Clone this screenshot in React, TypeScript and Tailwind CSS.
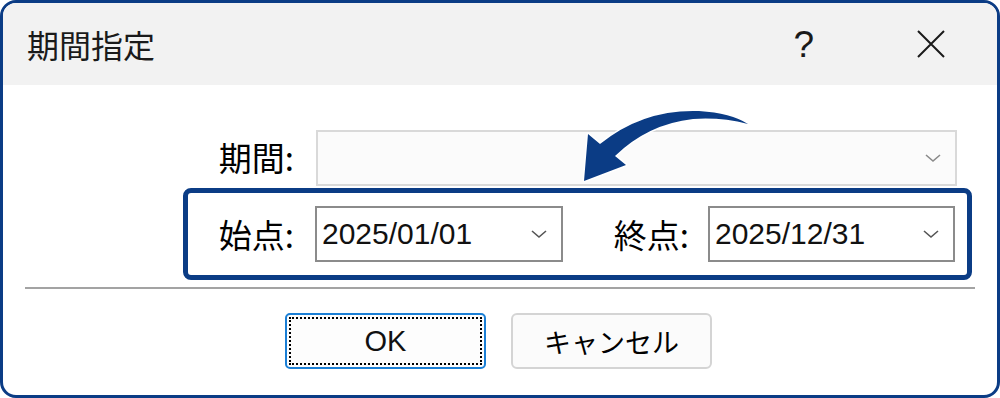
import { ReactNode } from "react";

const JP = "font-['Noto_Sans_CJK_JP','Noto_Sans',sans-serif]";
const LATIN = "font-['Liberation_Sans','Noto_Sans_CJK_JP',sans-serif]";

function Chevron({ light }: { light?: boolean }) {
  return (
    <svg width="18" height="12" viewBox="0 0 18 12" aria-hidden="true">
      <polyline
        points="2,3 9,9 16,3"
        fill="none"
        stroke={light ? "#8a8a8a" : "#555"}
        strokeWidth="1.6"
      />
    </svg>
  );
}

function Combo({ value, width, disabled }: { value?: string; width: string; disabled?: boolean }) {
  return (
    <div
      className={`flex h-[56px] items-center justify-between border-2 pl-[5px] pr-[13px] ${width} ${
        disabled ? "border-[#d9d9d9] bg-[#fbfbfb]" : "border-[#8b8b8b] bg-white"
      }`}
    >
      <span className={`${LATIN} text-[30px] leading-none text-[#111]`}>{value}</span>
      <Chevron light={disabled} />
    </div>
  );
}

function Label({ children, width, pr }: { children: ReactNode; width: string; pr: string }) {
  return (
    <div className={`${JP} ${width} ${pr} shrink-0 text-right text-[33px] leading-none text-black`}>
      {children}
    </div>
  );
}

function CurvedArrow() {
  return (
    <svg
      className="pointer-events-none absolute left-0 top-0"
      width="1000"
      height="398"
      viewBox="0 0 1000 398"
      aria-hidden="true"
    >
      <path
        d="M 597 141 Q 640 106 696 108 Q 728 110 745 121 Q 718 114 690 116 Q 645 121 612 153 L 623 162 L 581 178 L 585 131 Z"
        fill="#0b3c85"
        stroke="#ffffff"
        strokeWidth="3"
        strokeLinejoin="round"
        paintOrder="stroke"
      />
    </svg>
  );
}

export default function App() {
  return (
    <div className="relative h-[398px] w-[1000px] overflow-hidden rounded-[16px] border-[3px] border-[#0b3c85] bg-white">
      {/* title bar */}
      <div className="flex h-[82px] items-center bg-[#f2f2f2] pl-[24px]">
        <span className={`${JP} text-[32px] leading-none text-[#1a1a1a]`}>期間指定</span>
        <span className={`${LATIN} ml-auto text-[37px] leading-none text-[#1a1a1a]`}>?</span>
        <svg className="ml-[103px] mr-[52px]" width="28" height="28" viewBox="0 0 28 28" aria-hidden="true">
          <path d="M1 1 L27 27 M27 1 L1 27" stroke="#1a1a1a" strokeWidth="2" />
        </svg>
      </div>

      {/* body */}
      <div className="flex flex-col">
        <div className="mt-[45px] flex h-[55px] items-center">
          <Label width="w-[313px]" pr="pr-[22px]">期間:</Label>
          <Combo width="w-[641px]" disabled />
        </div>

        <div className="ml-[180px] mt-[3px] flex h-[92px] w-[789px] items-center rounded-[8px] border-[5px] border-[#0b3c85]">
          <Label width="w-[127px]" pr="pr-[21px]">始点:</Label>
          <Combo value="2025/01/01" width="w-[248px]" />
          <Label width="w-[145px]" pr="pr-[19px]">終点:</Label>
          <Combo value="2025/12/31" width="w-[247px]" />
        </div>

        <div className="ml-[22px] mt-[7px] h-[2px] w-[950px] bg-[#a3a3a3]" />

        <div className="mt-[24px] flex justify-center gap-[25px] pr-[3px]">
          <button
            type="button"
            className="flex h-[56px] w-[201px] items-center justify-center rounded-[5px] border-2 border-[#1a7fd6] bg-[#fdfdfd] p-[2px]"
          >
            <span className={`${LATIN} flex h-full w-full items-center justify-center border-2 border-dotted border-black text-[29px] leading-none text-[#111]`}>
              OK
            </span>
          </button>
          <button
            type="button"
            className={`${JP} flex h-[56px] w-[201px] items-center justify-center rounded-[6px] border-2 border-[#d4d4d4] bg-[#fbfbfb] text-[27px] leading-none text-black`}
          >
            キャンセル
          </button>
        </div>
      </div>

      <CurvedArrow />
    </div>
  );
}
